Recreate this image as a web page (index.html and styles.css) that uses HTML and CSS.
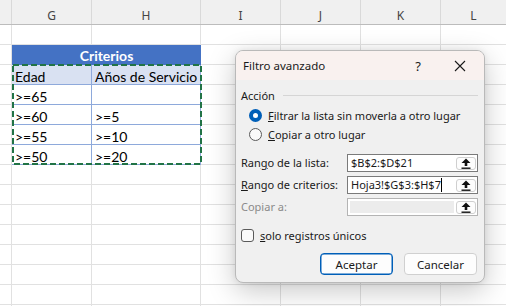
FILE: index.html
```html
<!DOCTYPE html>
<html lang="es">
<head>
    <meta charset="UTF-8">
    <title>Filtro avanzado</title>
    <link rel="stylesheet" href="styles.css">
</head>
<body>
    <div class="sheet">
        <div class="col-head">
            <div class="ch col-f"></div>
            <div class="ch col-g">G</div>
            <div class="ch col-h">H</div>
            <div class="ch col-i">I</div>
            <div class="ch col-j">J</div>
            <div class="ch col-k">K</div>
            <div class="ch col-l">L</div>
        </div>
        <div class="cells">
            <div class="criteria">
                <div class="crit-title">Criterios</div>
                <div class="crit-grid">
                    <div class="cell head">Edad</div>
                    <div class="cell head">Años de Servicio</div>
                    <div class="cell">&gt;=65</div>
                    <div class="cell"></div>
                    <div class="cell">&gt;=60</div>
                    <div class="cell">&gt;=5</div>
                    <div class="cell">&gt;=55</div>
                    <div class="cell">&gt;=10</div>
                    <div class="cell">&gt;=50</div>
                    <div class="cell">&gt;=20</div>
                </div>
                <!-- copy marquee -->
                <svg class="ants" width="190" height="101" viewBox="0 0 190 101">
                    <rect x="1" y="1" width="188" height="99" fill="none" stroke="#217346" stroke-width="2" stroke-dasharray="6 3"/>
                </svg>
            </div>
        </div>

        <div class="dialog">
            <div class="dlg-title">
                <span>Filtro avanzado</span>
                <span class="dlg-help">?</span>
                <svg class="dlg-close" width="12" height="12" viewBox="0 0 12 12">
                    <path d="M1 1 L11 11 M11 1 L1 11" stroke="#1a1a1a" stroke-width="1.1"/>
                </svg>
            </div>
            <div class="dlg-body">
                <div class="group">
                    <span>Acción</span>
                    <div class="group-line"></div>
                </div>
                <div class="radios">
                    <div class="radio-row">
                        <span class="radio on"></span>
                        <span><u>F</u>iltrar la lista sin moverla a otro lugar</span>
                    </div>
                    <div class="radio-row">
                        <span class="radio"></span>
                        <span><u>C</u>opiar a otro lugar</span>
                    </div>
                </div>

                <div class="fields">
                    <label>Ran<u>g</u>o de la lista:</label>
                    <div class="ref-box">
                        <span class="ref-text">$B$2:$D$21</span>
                        <span class="ref-btn"><svg width="10" height="11" viewBox="0 0 10 11"><path d="M5 0.5 L9.5 5 L6.3 5 L6.3 8 L3.7 8 L3.7 5 L0.5 5 Z" fill="#111"/><rect x="0.5" y="9.5" width="9" height="1.4" fill="#111"/></svg></span>
                    </div>
                    <label><u>R</u>ango de criterios:</label>
                    <div class="ref-box">
                        <span class="ref-text">Hoja3!$G$3:$H$7<span class="caret"></span></span>
                        <span class="ref-btn"><svg width="10" height="11" viewBox="0 0 10 11"><path d="M5 0.5 L9.5 5 L6.3 5 L6.3 8 L3.7 8 L3.7 5 L0.5 5 Z" fill="#111"/><rect x="0.5" y="9.5" width="9" height="1.4" fill="#111"/></svg></span>
                    </div>
                    <label class="disabled">Copiar a:</label>
                    <div class="ref-box off">
                        <span class="ref-text"></span>
                        <span class="ref-btn"><svg width="10" height="11" viewBox="0 0 10 11"><path d="M5 0.5 L9.5 5 L6.3 5 L6.3 8 L3.7 8 L3.7 5 L0.5 5 Z" fill="#111"/><rect x="0.5" y="9.5" width="9" height="1.4" fill="#111"/></svg></span>
                    </div>
                </div>

                <div class="check-row">
                    <span class="check"></span>
                    <span><u>s</u>olo registros únicos</span>
                </div>

                <div class="buttons">
                    <button class="btn primary">Aceptar</button>
                    <button class="btn">Cancelar</button>
                </div>
            </div>
        </div>
    </div>
</body>
</html>
```

FILE: styles.css
```css
body {
    margin: 0;
    background: #ffffff;
    font-family: "Noto Sans", "Open Sans", sans-serif;
    overflow: hidden;
}
.sheet {
    position: relative;
    width: 506px;
    height: 306px;
    overflow: hidden;
}
.col-head {
    display: flex;
    height: 25px;
    background: #f0f0f0;
    border-bottom: 1px solid #bcbcbc;
    box-sizing: border-box;
}
.ch {
    box-sizing: border-box;
    border-right: 1px solid #d9d9d9;
    display: flex;
    align-items: center;
    justify-content: center;
    padding-top: 6px;
    font-size: 12px;
    color: #444444;
}
.col-f { width: 12px; }
.col-g { width: 80px; }
.col-h { width: 109px; }
.col-i { width: 80px; }
.col-j { width: 80px; }
.col-k { width: 80px; }
.col-l { width: 65px; border-right: none; }

.cells {
    height: 281px;
    padding-top: 20px;
    box-sizing: border-box;
    background:
        linear-gradient(#e1e1e1, #e1e1e1) 11px 0 / 1px 100% no-repeat,
        linear-gradient(#e1e1e1, #e1e1e1) 91px 0 / 1px 100% no-repeat,
        linear-gradient(#e1e1e1, #e1e1e1) 200px 0 / 1px 100% no-repeat,
        linear-gradient(#e1e1e1, #e1e1e1) 280px 0 / 1px 100% no-repeat,
        linear-gradient(#e1e1e1, #e1e1e1) 360px 0 / 1px 100% no-repeat,
        linear-gradient(#e1e1e1, #e1e1e1) 440px 0 / 1px 100% no-repeat,
        repeating-linear-gradient(to bottom, transparent 0 19px, #e1e1e1 19px 20px);
}
.criteria {
    position: relative;
    margin-left: 12px;
    width: 189px;
    font-family: Lato, "Liberation Sans", sans-serif;
    font-size: 14px;
}
.crit-title {
    height: 20px;
    background: #4472c4;
    color: #ffffff;
    font-weight: bold;
    text-align: center;
    line-height: 21px;
}
.crit-grid {
    display: grid;
    grid-template-columns: 80px 109px;
    grid-auto-rows: 20px;
    background: #ffffff;
}
.cell {
    box-sizing: border-box;
    border-right: 1px solid #8ea9db;
    border-bottom: 1px solid #8ea9db;
    padding: 2px 0 0 3px;
    line-height: 20px;
    color: #000000;
    white-space: nowrap;
    overflow: hidden;
}
.cell.head {
    background: #d9e1f2;
}
.ants {
    position: absolute;
    left: 0;
    top: 19px;
}

/* dialog window */
.dialog {
    position: absolute;
    left: 235px;
    top: 50px;
    width: 250px;
    height: 233px;
    box-sizing: border-box;
    border: 1px solid #b9b9b9;
    border-radius: 8px;
    background: #f0f0f0;
    box-shadow: 0 8px 28px rgba(0, 0, 0, 0.22), 0 0 6px rgba(0, 0, 0, 0.08);
    font-size: 11px;
    color: #1a1a1a;
    overflow: hidden;
}
.dlg-title {
    display: flex;
    align-items: center;
    height: 29px;
    padding: 0 8px 0 7px;
    background: #f9f1ef;
    font-size: 11.5px;
}
.dlg-help {
    margin-left: auto;
    margin-right: 33px;
    font-size: 13px;
}
.dlg-close {
    margin-right: 10px;
}
.dlg-body {
    padding: 6px 6px 0 5px;
}
.group {
    display: flex;
    align-items: center;
    gap: 8px;
    height: 18px;
}
.group-line {
    flex: 1;
    height: 1px;
    background: #d5d5d5;
}
.radios {
    margin-top: 2px;
}
.radio-row {
    display: flex;
    align-items: center;
    gap: 6px;
    height: 19px;
    padding-left: 8px;
}
.radio {
    width: 11px;
    height: 11px;
    border-radius: 50%;
    border: 1px solid #5a5a5a;
    background: #fafafa;
    flex: none;
}
.radio.on {
    width: 5px;
    height: 5px;
    border: 4px solid #005fb8;
    background: #ffffff;
}
.fields {
    display: grid;
    grid-template-columns: 106px 131px;
    grid-auto-rows: 18px;
    row-gap: 4px;
    align-items: center;
    margin-top: 10px;
}
.fields label {
    line-height: 18px;
}
.fields label.disabled {
    color: #8a8a8a;
}
.ref-box {
    display: flex;
    align-items: center;
    height: 18px;
    box-sizing: border-box;
    border: 1px solid #7a7a7a;
    background: #ffffff;
    padding: 0 1px 0 3px;
}
.ref-box.off {
    border-color: #b4b4b4;
    padding-left: 2px;
}
.ref-text {
    flex: 1;
    height: 16px;
    line-height: 16px;
    white-space: nowrap;
    font-size: 11px;
}
.ref-box.off .ref-text {
    height: 12px;
    background: #ececec;
    margin-right: 2px;
}
.caret {
    display: inline-block;
    width: 1px;
    height: 14px;
    background: #000000;
    vertical-align: -3px;
}
.ref-btn {
    display: flex;
    align-items: center;
    justify-content: center;
    width: 20px;
    height: 13px;
    box-sizing: border-box;
    border: 1px solid #cfcfcf;
    border-radius: 3px;
    background: #fdfdfd;
}
.check-row {
    display: flex;
    align-items: center;
    gap: 6px;
    margin-top: 11px;
    height: 16px;
}
.check {
    width: 11px;
    height: 11px;
    border: 1px solid #5a5a5a;
    border-radius: 3px;
    background: #fafafa;
}
.buttons {
    display: flex;
    justify-content: flex-end;
    gap: 11px;
    margin-top: 10px;
    padding-right: 1px;
}
.btn {
    width: 73px;
    height: 22px;
    font-family: inherit;
    font-size: 11.5px;
    color: #1a1a1a;
    background: #fdfdfd;
    border: 1px solid #d0d0d0;
    border-radius: 4px;
    padding: 0;
}
.btn.primary {
    border-color: #005fb8;
    box-shadow: inset 0 0 0 0.5px #005fb8;
}
```
